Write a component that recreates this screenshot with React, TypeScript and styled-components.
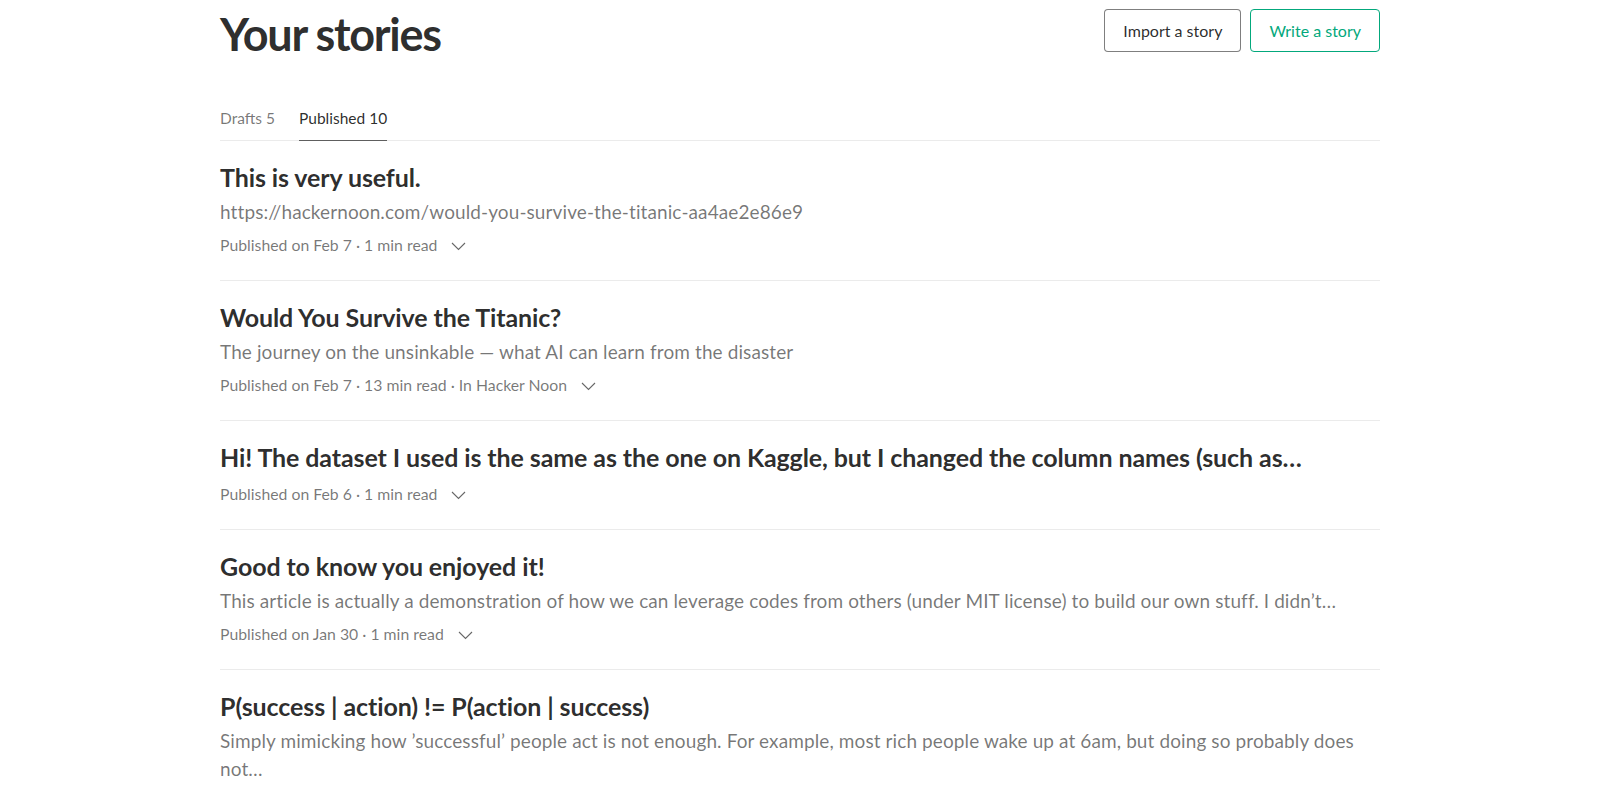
import styled, { createGlobalStyle } from "styled-components";

// DATA
interface IStory {
  title: string;
  subtitle?: string;
  date: string;
  readTime: string;
  publication?: string;
}

const stories: IStory[] = [
  {
    title: "This is very useful.",
    subtitle: "https://hackernoon.com/would-you-survive-the-titanic-aa4ae2e86e9",
    date: "Feb 7",
    readTime: "1 min read",
  },
  {
    title: "Would You Survive the Titanic?",
    subtitle: "The journey on the unsinkable — what AI can learn from the disaster",
    date: "Feb 7",
    readTime: "13 min read",
    publication: "Hacker Noon",
  },
  {
    title:
      "Hi! The dataset I used is the same as the one on Kaggle, but I changed the column names (such as…",
    date: "Feb 6",
    readTime: "1 min read",
  },
  {
    title: "Good to know you enjoyed it!",
    subtitle:
      "This article is actually a demonstration of how we can leverage codes from others (under MIT license) to build our own stuff. I didn’t…",
    date: "Jan 30",
    readTime: "1 min read",
  },
  {
    title: "P(success | action) != P(action | success)",
    subtitle:
      "Simply mimicking how ’successful’ people act is not enough. For example, most rich people wake up at 6am, but doing so probably does not…",
    date: "Jan 24",
    readTime: "4 min read",
  },
];

// COLORS
const colors = {
  text: "rgba(0, 0, 0, 0.84)",
  muted: "rgba(0, 0, 0, 0.54)",
  divider: "rgba(0, 0, 0, 0.08)",
  green: "#03a87c",
};

function Chevron() {
  return (
    <ChevronIcon width="15" height="9" viewBox="0 0 15 9">
      <polyline points="1,1 7.5,7.5 14,1" fill="none" stroke="currentColor" strokeWidth="1.1" />
    </ChevronIcon>
  );
}

function StoryRow({ story }: { story: IStory }) {
  const renderMeta = () => {
    let meta = `Published on ${story.date} · ${story.readTime}`;
    if (story.publication) {
      meta += ` · In ${story.publication}`;
    }
    return meta;
  };

  return (
    <Row>
      <StoryTitle>{story.title}</StoryTitle>
      {story.subtitle && <StorySubtitle>{story.subtitle}</StorySubtitle>}
      <Meta>
        {renderMeta()}
        <Chevron />
      </Meta>
    </Row>
  );
}

export default function App() {
  return (
    <>
      <GlobalStyle />
      <Page>
        <Header>
          <Heading>Your stories</Heading>
          <Actions>
            <Button>Import a story</Button>
            <Button $accent>Write a story</Button>
          </Actions>
        </Header>
        <Tabs>
          <Tab>Drafts 5</Tab>
          <Tab $active>Published 10</Tab>
        </Tabs>
        <List>
          {stories.map((story) => (
            <StoryRow key={story.title} story={story} />
          ))}
        </List>
      </Page>
    </>
  );
}

// STYLED COMPONENTS
const GlobalStyle = createGlobalStyle`
  body {
    margin: 0;
    background: #fff;
    font-family: Lato, "Liberation Sans", sans-serif;
    color: ${colors.text};
    overflow: hidden;
  }
`;

const Page = styled.div`
  width: 1160px;
  margin: 0 auto;
`;

const Header = styled.header`
  display: flex;
  justify-content: space-between;
  align-items: flex-start;
`;

const Heading = styled.h1`
  margin: 7px 0 0;
  font-size: 45px;
  line-height: 55px;
  font-weight: 700;
  letter-spacing: -1.3px;
  color: ${colors.text};
`;

const Actions = styled.div`
  display: flex;
  gap: 9px;
  margin-top: 9px;
`;

const Button = styled.button<{ $accent?: boolean }>`
  height: 43px;
  padding: 0 18px;
  background: #fff;
  border: 1px solid ${(p) => (p.$accent ? colors.green : "rgba(0, 0, 0, 0.5)")};
  border-radius: 4px;
  color: ${(p) => (p.$accent ? colors.green : colors.text)};
  font-family: Lato, "Liberation Sans", sans-serif;
  font-size: 16px;
  cursor: pointer;
`;

const Tabs = styled.nav`
  display: flex;
  gap: 24px;
  margin-top: 46px;
  border-bottom: 1px solid ${colors.divider};
`;

const Tab = styled.span<{ $active?: boolean }>`
  padding-bottom: 12px;
  margin-bottom: -1px;
  font-size: 15.5px;
  line-height: 20px;
  color: ${(p) => (p.$active ? colors.text : colors.muted)};
  border-bottom: 1px solid ${(p) => (p.$active ? "rgba(0, 0, 0, 0.6)" : "transparent")};
`;

const List = styled.div`
  display: flex;
  flex-direction: column;
`;

const Row = styled.article`
  padding: 22px 0 25px;
  border-bottom: 1px solid ${colors.divider};
`;

const StoryTitle = styled.h2`
  margin: 0;
  font-size: 25px;
  line-height: 29px;
  font-weight: 700;
  letter-spacing: -0.1px;
  color: ${colors.text};
`;

const StorySubtitle = styled.p`
  margin: 6px 0 -3px;
  font-size: 19px;
  line-height: 28px;
  letter-spacing: 0.1px;
  color: ${colors.muted};
`;

const Meta = styled.div`
  display: flex;
  align-items: center;
  margin-top: 12px;
  font-size: 15.8px;
  line-height: 20px;
  color: ${colors.muted};
`;

const ChevronIcon = styled.svg`
  margin-left: 14px;
  margin-top: 2px;
  color: rgba(0, 0, 0, 0.6);
`;
